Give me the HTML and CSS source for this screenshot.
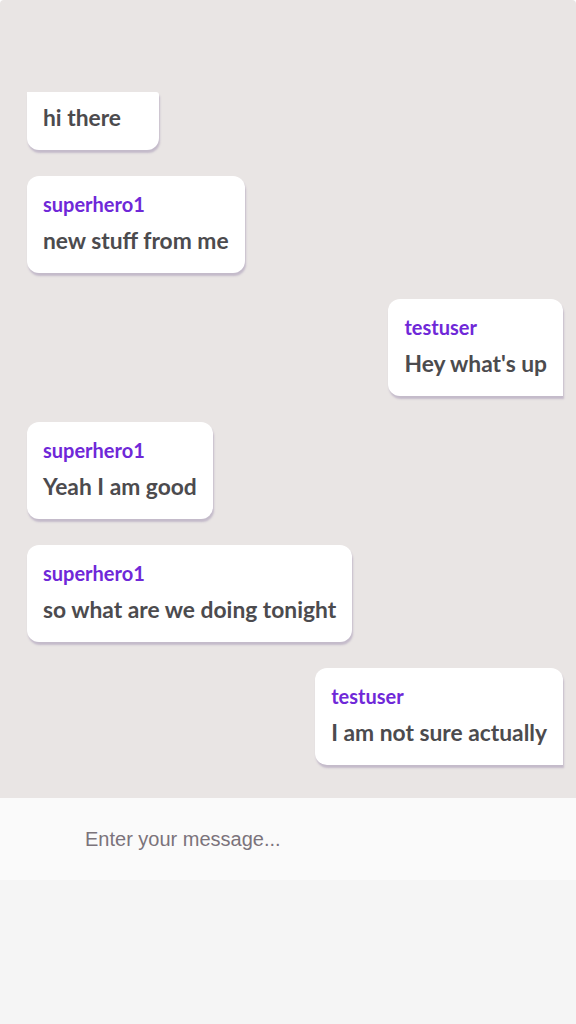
FILE: index.html
```html
<!DOCTYPE html>
<html lang="en">
<head>
<meta charset="utf-8">
<title>Chat</title>
<link rel="stylesheet" href="styles.css">
</head>
<body>
<div class="app">
  <main class="messages">
    <div class="msg left first">
      <div class="text">hi there</div>
    </div>
    <div class="msg left">
      <div class="name">superhero1</div>
      <div class="text">new stuff from me</div>
    </div>
    <div class="msg right">
      <div class="name">testuser</div>
      <div class="text">Hey what's up</div>
    </div>
    <div class="msg left">
      <div class="name">superhero1</div>
      <div class="text">Yeah I am good</div>
    </div>
    <div class="msg left">
      <div class="name">superhero1</div>
      <div class="text">so what are we doing tonight</div>
    </div>
    <div class="msg right">
      <div class="name">testuser</div>
      <div class="text">I am not sure actually</div>
    </div>
  </main>
  <footer class="composer">
    <form class="composer-form">
      <input class="composer-input" type="text" placeholder="Enter your message...">
    </form>
  </footer>
</div>
</body>
</html>
```

FILE: styles.css
```css
* { box-sizing: border-box; }
html, body { margin: 0; padding: 0; }
body {
  background: #ffffff;
  font-family: Lato, "Open Sans", sans-serif;
  width: 576px;
  height: 1024px;
  overflow: hidden;
}
.app {
  display: flex;
  flex-direction: column;
  height: 1024px;
}
.messages {
  height: 798px;
  background: #e9e5e4;
  border-radius: 4px 4px 0 0;
  padding: 92px 13px 0 27px;
  display: flex;
  flex-direction: column;
  align-items: flex-start;
  gap: 26px;
}
.msg {
  min-width: 132px;
  background: #ffffff;
  padding: 11px 16px 19px 16px;
  border-radius: 12px;
  box-shadow: 1px 3px 2px rgba(150, 135, 170, 0.45);
}
.msg.first { border-radius: 0 3px 12px 12px; }
.msg.right {
  align-self: flex-end;
  border-radius: 12px 12px 0 12px;
}
.name {
  font-size: 20px;
  line-height: 24px;
  font-weight: 700;
  color: #6f28d8;
  margin: 5px 0 10px;
}
.text {
  font-size: 22.8px;
  line-height: 28px;
  font-weight: 700;
  color: #4c4b4e;
  white-space: nowrap;
}
.composer {
  flex: 1;
  background: #f5f5f5;
}
.composer-form {
  margin: 0;
}
.composer-input {
  display: block;
  width: 100%;
  height: 82px;
  border: none;
  outline: none;
  background: #fafafa;
  padding: 0 0 0 85px;
  font-family: "Liberation Sans", Arial, sans-serif;
  font-size: 20px;
  color: #333;
}
.composer-input::placeholder {
  color: #7b737b;
}
```
